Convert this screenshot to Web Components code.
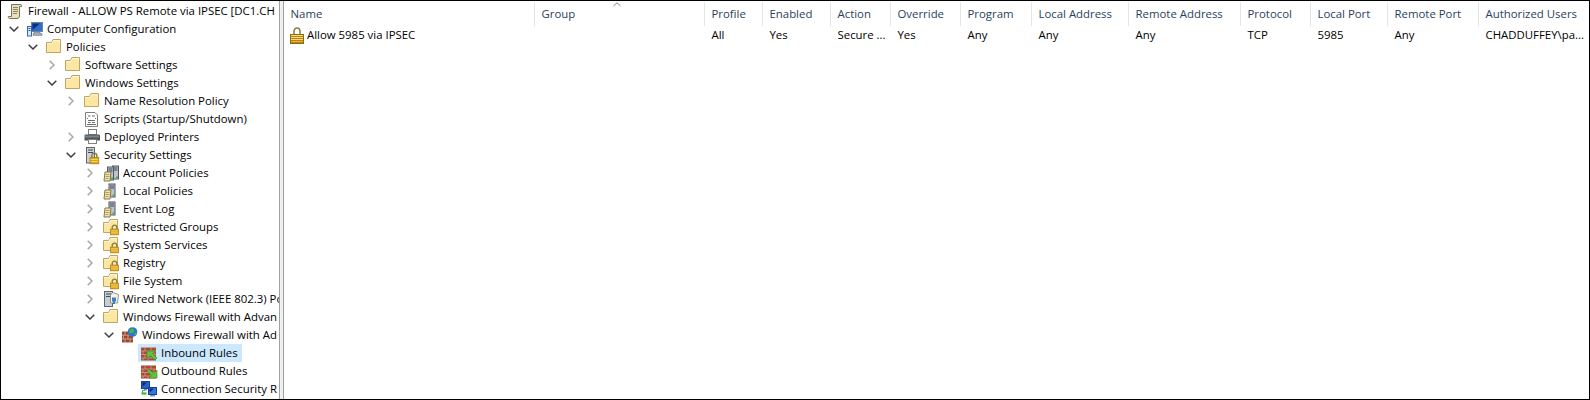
<!DOCTYPE html>
<html lang="en">
<head>
<meta charset="utf-8">
<title>Firewall - Group Policy Editor</title>
<style>
  html, body { margin: 0; padding: 0; background: #fff; }
  body { font: 11.4px "Open Sans", "Noto Sans", "Liberation Sans", sans-serif; color: #000; }
</style>
</head>
<body>
<gp-window>
  <gp-tree slot="tree">
    <tree-row root icon="scroll" label="Firewall - ALLOW PS Remote via IPSEC [DC1.CH"></tree-row>
    <tree-row level="0" exp="open" icon="computer" label="Computer Configuration"></tree-row>
    <tree-row level="1" exp="open" icon="folder" label="Policies"></tree-row>
    <tree-row level="2" exp="closed" icon="folder" label="Software Settings"></tree-row>
    <tree-row level="2" exp="open" icon="folder" label="Windows Settings"></tree-row>
    <tree-row level="3" exp="closed" icon="folder" label="Name Resolution Policy"></tree-row>
    <tree-row level="3" icon="script" label="Scripts (Startup/Shutdown)"></tree-row>
    <tree-row level="3" exp="closed" icon="printer" label="Deployed Printers"></tree-row>
    <tree-row level="3" exp="open" icon="serverlock" label="Security Settings"></tree-row>
    <tree-row level="4" exp="closed" icon="servers" label="Account Policies"></tree-row>
    <tree-row level="4" exp="closed" icon="server" label="Local Policies"></tree-row>
    <tree-row level="4" exp="closed" icon="server" label="Event Log"></tree-row>
    <tree-row level="4" exp="closed" icon="folderlock" label="Restricted Groups"></tree-row>
    <tree-row level="4" exp="closed" icon="folderlock" label="System Services"></tree-row>
    <tree-row level="4" exp="closed" icon="folderlock" label="Registry"></tree-row>
    <tree-row level="4" exp="closed" icon="folderlock" label="File System"></tree-row>
    <tree-row level="4" exp="closed" icon="wired" label="Wired Network (IEEE 802.3) Po"></tree-row>
    <tree-row level="4" exp="open" icon="folder" label="Windows Firewall with Advan"></tree-row>
    <tree-row level="5" exp="open" icon="firewall" label="Windows Firewall with Ad"></tree-row>
    <tree-row level="6" icon="inbound" label="Inbound Rules" selected></tree-row>
    <tree-row level="6" icon="outbound" label="Outbound Rules"></tree-row>
    <tree-row level="6" icon="connection" label="Connection Security R"></tree-row>
  </gp-tree>
  <rule-list slot="list">
    <rule-header>
      <header-cell>Name</header-cell>
      <header-cell sorted>Group</header-cell>
      <header-cell>Profile</header-cell>
      <header-cell>Enabled</header-cell>
      <header-cell>Action</header-cell>
      <header-cell>Override</header-cell>
      <header-cell>Program</header-cell>
      <header-cell>Local Address</header-cell>
      <header-cell>Remote Address</header-cell>
      <header-cell>Protocol</header-cell>
      <header-cell>Local Port</header-cell>
      <header-cell>Remote Port</header-cell>
      <header-cell>Authorized Users</header-cell>
    </rule-header>
    <rule-row>
      <rule-cell first icon="lock">Allow 5985 via IPSEC</rule-cell>
      <rule-cell></rule-cell>
      <rule-cell>All</rule-cell>
      <rule-cell>Yes</rule-cell>
      <rule-cell>Secure ...</rule-cell>
      <rule-cell>Yes</rule-cell>
      <rule-cell>Any</rule-cell>
      <rule-cell>Any</rule-cell>
      <rule-cell>Any</rule-cell>
      <rule-cell>TCP</rule-cell>
      <rule-cell>5985</rule-cell>
      <rule-cell>Any</rule-cell>
      <rule-cell>CHADDUFFEY\pa...</rule-cell>
    </rule-row>
  </rule-list>
</gp-window>

<script>
const lockAt = (x, y, s = 1) => `<g transform="translate(${x} ${y}) scale(${s})">
  <path d="M1.5 4V2.6C1.5 1.2 2.5.5 3.5.5S5.5 1.2 5.5 2.6V4" fill="none" stroke="#8a7a4a" stroke-width="1.2"/>
  <rect x="0" y="4" width="7" height="5" fill="#dfa31a" stroke="#a87a10" stroke-width=".6"/>
  <path d="M.5 5.5h6M.5 7.3h6" stroke="#f7d667" stroke-width=".8"/></g>`;

const folderBase = `<path d="M.5 3.5H5.5L7 .5H14.5V13.5H.5Z" fill="#fbe6a2" stroke="#bfa468"/>
  <path d="M1.5 4.5H6L7.5 1.5H13.5V4" fill="none" stroke="#fff6d4"/>`;

const tower = (x, y) => `<g transform="translate(${x} ${y})">
  <rect x=".5" y=".5" width="6" height="13" fill="#bcc3ca" stroke="#4f5862"/>
  <path d="M1.5 2.5h4M1.5 4.5h4" stroke="#3c4550"/><rect x="4" y="11" width="2" height="1.5" fill="#39b54a"/></g>`;

const paper = (x, y) => `<g transform="translate(${x} ${y})">
  <path d="M1.5.5H7.5L6.5 9.5H.5Z" fill="#f4e2a6" stroke="#857849"/>
  <path d="M2 3h4M2 5h4M2 7h3" stroke="#a08f5c" stroke-width=".8"/></g>`;

const brickLines = `<path d="M0 2.5H15M0 6H15M0 9.5H15M0 13H15M4 2.5V6M10 2.5V6M2 6V9.5M7 6V9.5M13 6V9.5M4 9.5V13M10 9.5V13M2 13V15.5M7 13V15.5" stroke="#d29f8a" stroke-width=".8" fill="none"/>`;
const bricks = `<rect x="0" y="2.5" width="15" height="13" fill="#a84a36"/>${brickLines}`;

const ICONS = {
  scroll: `<path d="M3.5 1.5H12.5C13.6 1.5 14 2.4 13.5 3.5H11.5V13C11.5 14.6 10.5 15.5 9 15.5H1.5C.5 15.5 0 14.6.3 13.5H3.5Z" fill="#e9dfb8" stroke="#77735e"/>
    <path d="M5 4.5H10M5 6.5H10M5 8.5H10M5 10.5H9" stroke="#7f7b66" stroke-width=".9"/>`,
  computer: `<rect x="4.5" y="1.5" width="11" height="9" fill="#2b6fd0" stroke="#76818f"/>
    <path d="M5.5 2.5H13L5.5 9Z" fill="#0e2f78"/>
    <path d="M7 11H13V12.5H15V14.5H6V12.5H7Z" fill="#a2abb5" stroke="#6e7782" stroke-width=".5"/>
    <rect x=".5" y="5.5" width="4" height="9.5" fill="#dfe7f2" stroke="#2f66c0"/>
    <path d="M1.5 7.5H3.5M1.5 9.5H3.5" stroke="#1f57b4"/>`,
  folder: folderBase,
  folderlock: `${folderBase}${lockAt(7.5, 5.5, 1.15)}`,
  script: `<path d="M1.5 1.5H11L13.5 4V15.5H1.5Z" fill="#fff" stroke="#7f7f7f"/>
    <path d="M4 5H6.5M8 5H11M3 7L4 8M12 7L11 8M4 9.5H11M4 11.5H6.5M8 11.5H11M3 13.5H12" stroke="#6d6d6d" stroke-width="1" fill="none"/>`,
  printer: `<rect x="4.5" y=".5" width="8" height="5" fill="#fff" stroke="#808080"/>
    <path d="M1 5.5H15Q16 5.5 16 7V11.5H13V13.5H4V11.5H.5V7Q.5 5.5 1 5.5Z" fill="#50555d"/>
    <rect x="1" y="6.5" width="14" height="2" fill="#7e848c"/>
    <rect x="4.5" y="10.5" width="8" height="4" fill="#fff" stroke="#808080"/>`,
  serverlock: `<rect x="2.5" y=".5" width="8" height="15.5" fill="#cdd2d7" stroke="#5d6670"/>
    <path d="M4 3H9M4 5.5H9" stroke="#3f4853" stroke-width="1.2"/>
    ${lockAt(6, 5.5, 1.25)}`,
  servers: `${tower(9, .5)}${tower(4, 1.5)}${paper(.5, 6.5)}`,
  server: `${tower(5.5, .5)}${paper(.5, 6.5)}`,
  wired: `<rect x="1.5" y=".5" width="8" height="15" fill="#c8ced5" stroke="#5c6570"/>
    <path d="M3 3H8M3 5.5H8" stroke="#404a56"/>
    <path d="M9.5 1.5L15.5 3.5L14.5 12H7.5V4Z" fill="#f3f3ee" stroke="#7d7d6e" stroke-width=".8"/>
    <path d="M9 6.5H13V10.5H12V13H10V10.5H9Z" fill="#3f7fc4"/>`,
  firewall: `<rect x="0" y="4.5" width="11" height="11" fill="#9c4631"/>
    <path d="M0 4.5H11M0 8.2H11M0 12H11M0 15.5H11M3 4.5V8.2M8 4.5V8.2M1.5 8.2V12M6 8.2V12M3 12V15.5M8 12V15.5" stroke="#d7b09c" stroke-width=".8" fill="none"/>
    <circle cx="10.5" cy="5" r="4.8" fill="#2479d4"/>
    <path d="M8 2Q11 .8 12 3T10 6 7.5 6ZM12.5 6Q14.5 4.8 15 6T13 9Z" fill="#4fb33c"/>`,
  inbound: `${bricks}<path d="M6 6H14L11.5 8.5L16 13L14 15L9.5 10.5L6 14Z" fill="#5cc63a" stroke="#2d8d20" stroke-width=".6"/>`,
  outbound: `${bricks}<path d="M16 15H8L10.5 12.5L6 8L8 6L12.5 10.5L16 7Z" fill="#5cc63a" stroke="#2d8d20" stroke-width=".6"/>`,
  connection: `<rect x=".5" y=".5" width="8" height="7" fill="#2162cf" stroke="#1a3f8f"/>
    <path d="M1.5 1.5H6L1.5 5.5Z" fill="#0b2a78"/><path d="M3 8H6V9.5H3Z" fill="#8a93a0"/>
    <rect x="7.5" y="6.5" width="8" height="7" fill="#2a7ae0" stroke="#1a3f8f"/>
    <path d="M8.5 7.5H13L8.5 11.5Z" fill="#0b2a78"/><path d="M9 14H14V15.5H9Z" fill="#8a93a0"/>
    <path d="M.5 12.5H5.5" stroke="#39b54a" stroke-width="2.2"/><path d="M1.5 12V9.5H4" stroke="#39b54a" fill="none"/>`,
  lock: `<path d="M4 7V4.5C4 2 5.4 1 7 1S10 2 10 4.5V7" fill="none" stroke="#8e7f4f" stroke-width="1.6"/>
    <rect x=".5" y="7.5" width="13" height="9" fill="#e8b32b" stroke="#8f6a12"/>
    <path d="M1 9.5H13M1 11.5H13M1 13.5H13M1 15.5H13" stroke="#b98616"/>
    <path d="M1 8.5H13M1 10.5H13M1 12.5H13" stroke="#f8dc7c"/>`
};

const def = (name, css, html) => {
  customElements.define(name, class extends HTMLElement {
    constructor() {
      super();
      this.attachShadow({ mode: "open" }).innerHTML = `<style>${css}</style>${typeof html === "function" ? "" : html}`;
    }
    connectedCallback() {
      if (typeof html === "function") {
        const tpl = document.createElement("template");
        tpl.innerHTML = html(this);
        this.shadowRoot.append(tpl.content);
      }
    }
  });
};

def("ui-icon",
  `:host { display: block; flex: none; width: 16px; height: var(--h, 16px); }
   svg { display: block; overflow: visible; }`,
  el => {
    const h = el.getAttribute("name") === "lock" ? 17 : 16;
    return `<svg width="16" height="${h}" viewBox="0 0 16 ${h}" aria-hidden="true">${ICONS[el.getAttribute("name")] || ""}</svg>`;
  });

def("gp-window",
  `:host { display: flex; box-sizing: border-box; width: 1590px; height: 400px; border: 1px solid #000; background: #fff; overflow: hidden; }
   .tree { flex: none; width: 278px; overflow: hidden; }
   .split { flex: none; box-sizing: border-box; width: 5px; background: #f0f0f0; border-left: 1px solid #a0a0a0; border-right: 1px solid #a0a0a0; }
   .list { flex: 1; min-width: 0; }`,
  `<div class="tree"><slot name="tree"></slot></div><div class="split"></div><div class="list"><slot name="list"></slot></div>`);

def("gp-tree",
  `:host { display: flex; flex-direction: column; padding-top: 1px; }`,
  `<slot></slot>`);

def("tree-row",
  `:host { display: flex; align-items: center; height: 18px; white-space: nowrap; color: #000; }
   .exp { flex: none; width: 16px; height: 18px; display: flex; align-items: center; justify-content: center; }
   .body { display: flex; align-items: center; height: 18px; margin-left: 2px; padding: 0 4px 0 3px; }
   :host([selected]) .body { background: #cce8ff; }
   .label { margin-left: 4px; padding-bottom: 2px; }`,
  el => {
    const root = el.hasAttribute("root");
    const level = +el.getAttribute("level") || 0;
    el.style.paddingLeft = root ? "2px" : (5 + level * 19) + "px";
    const exp = el.getAttribute("exp");
    const chev = exp === "open"
      ? `<svg width="10" height="6" viewBox="0 0 10 6"><path d="M.7.7L5 5L9.3.7" fill="none" stroke="#404040" stroke-width="1.5"/></svg>`
      : exp === "closed"
      ? `<svg width="6" height="10" viewBox="0 0 6 10"><path d="M.7.7L5 5L.7 9.3" fill="none" stroke="#a6a6a6" stroke-width="1.5"/></svg>`
      : "";
    return `${root ? "" : `<div class="exp">${chev}</div>`}
      <div class="body"><ui-icon name="${el.getAttribute("icon")}"></ui-icon><span class="label">${el.getAttribute("label")}</span></div>`;
  });

const COLS = "251px 170px 58px 68px 60px 70px 71px 97px 112px 70px 77px 91px 110px";

def("rule-list",
  `:host { display: block; --cols: ${COLS}; }`,
  `<slot></slot>`);

def("rule-header",
  `:host { display: block; height: 25px; }
   .g { display: grid; grid-template-columns: var(--cols); height: 25px; }`,
  `<div class="g"><slot></slot></div>`);

def("header-cell",
  `:host { display: flex; align-items: center; position: relative; box-sizing: border-box; height: 24px; margin-top: 1px; padding: 0 0 2px 6.5px; border-right: 1px solid #e5e5e5; color: #2a3f5c; white-space: nowrap; }
   :host(:last-child) { border-right: 0; }
   .caret { position: absolute; left: 78px; top: 0; display: block; }`,
  el => `<slot></slot>${el.hasAttribute("sorted") ? `<svg class="caret" width="8" height="5" viewBox="0 0 8 5"><path d="M.5 4L4 .8L7.5 4" fill="none" stroke="#808080"/></svg>` : ""}`);

def("rule-row",
  `:host { display: block; height: 18px; }
   .g { display: grid; grid-template-columns: var(--cols); height: 18px; }`,
  `<div class="g"><slot></slot></div>`);

def("rule-cell",
  `:host { display: flex; align-items: center; height: 18px; padding-left: 6.5px; white-space: nowrap; overflow: hidden; min-width: 0; color: #000; }
   :host([first]) { padding-left: 6px; overflow: visible; }
   .t { display: block; padding-bottom: 2px; } ui-icon { margin-right: 1px; --h: 17px; }`,
  el => `${el.getAttribute("icon") ? `<ui-icon name="${el.getAttribute("icon")}"></ui-icon>` : ""}<span class="t"><slot></slot></span>`);
</script>
</body>
</html>
